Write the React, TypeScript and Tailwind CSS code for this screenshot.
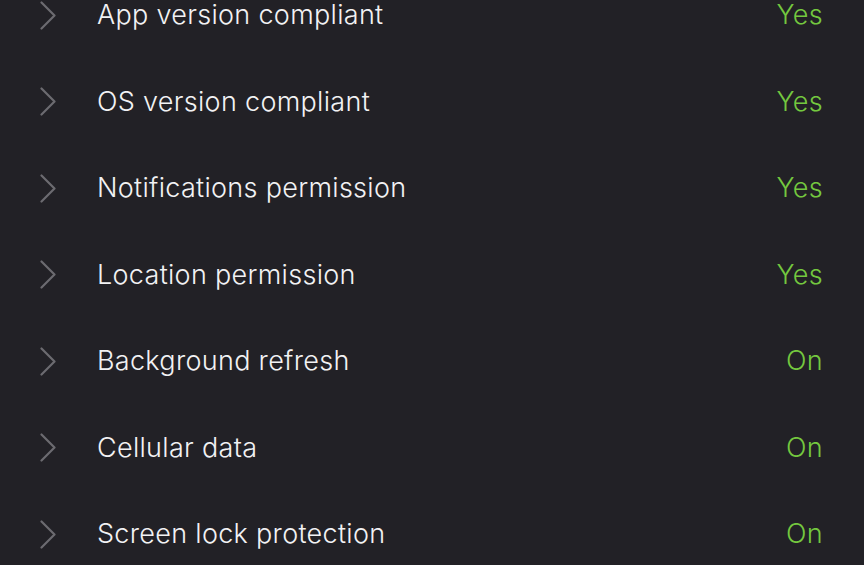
const ROWS: { label: string; value: string }[] = [
  { label: 'App version compliant', value: 'Yes' },
  { label: 'OS version compliant', value: 'Yes' },
  { label: 'Notifications permission', value: 'Yes' },
  { label: 'Location permission', value: 'Yes' },
  { label: 'Background refresh', value: 'On' },
  { label: 'Cellular data', value: 'On' },
  { label: 'Screen lock protection', value: 'On' },
];

const Chevron = () => (
  <svg width="17" height="29" viewBox="0 0 17 29" fill="none" className="shrink-0">
    <path d="M1.5 1.5 L14.5 14.5 L1.5 27.5" stroke="#6c6b70" strokeWidth="2.2" strokeLinecap="round" strokeLinejoin="round" />
  </svg>
);

export default function App() {
  return (
    <div
      className="h-[565px] w-[864px] overflow-hidden bg-[#222126] text-[#f2f2f4]"
      style={{ fontFamily: 'Inter, "Noto Sans", sans-serif' }}
    >
      <div className="-mt-[28px] flex flex-col">
        {ROWS.map((row) => (
          <div key={row.label} className="flex h-[86.5px] items-center pl-[40px] pr-[41px]">
            <Chevron />
            <span className="ml-[40px] flex-1 text-[27px] font-light tracking-[0.3px]">{row.label}</span>
            <span className="text-[27px] font-light tracking-[0.3px] text-[#74c83f]">{row.value}</span>
          </div>
        ))}
      </div>
    </div>
  );
}
